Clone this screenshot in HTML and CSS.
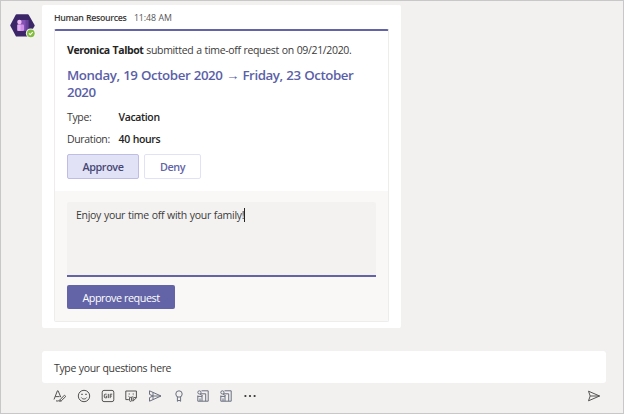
FILE: index.html
```html
<!DOCTYPE html>
<html lang="en">
<head>
<meta charset="utf-8">
<title>Human Resources</title>
<link rel="stylesheet" href="styles.css">
</head>
<body>
<main class="chat">
  <section class="message">
    <div class="avatar">
      <svg width="28" height="26" viewBox="0 0 28 26">
        <path d="M7.6 2.2h11.2L24.7 12.4 18.8 22.6H7.6L2.2 12.4z" fill="#3b2768" stroke="#3b2768" stroke-width="2" stroke-linejoin="round"/>
        <path d="M11 7h8.3v8.8a2 2 0 0 1-2 2H11z" fill="#8451b5"/>
        <path d="M16.5 7h2.8v10.4h-2.8z" fill="#69419b"/>
        <circle cx="10.4" cy="9" r="2.2" fill="#edbaf1"/>
        <rect x="8.2" y="11.5" width="6.8" height="6.5" rx="1" fill="#cf91e7"/>
        <path d="M8.6 11.5h3v6.2h-3z" fill="#e2b0f2"/>
        <circle cx="21.8" cy="20.3" r="4.9" fill="#f7f7f5"/>
        <circle cx="21.8" cy="20.3" r="3.9" fill="#83bd3f"/>
        <path d="M19.9 20.4l1.4 1.3 2.4-2.6" fill="none" stroke="#fff" stroke-width="1.1"/>
      </svg>
    </div>
    <article class="bubble">
      <header class="meta"><span class="sender">Human Resources</span><time class="time">11:48 AM</time></header>
      <div class="card">
        <div class="details">
          <p class="summary"><b>Veronica Talbot</b> submitted a time-off request on 09/21/2020.</p>
          <h1 class="dates">Monday, 19 October 2020 <span class="arrow">→</span> Friday, 23 October<br>2020</h1>
          <dl class="facts">
            <dt>Type:</dt><dd>Vacation</dd>
            <dt>Duration:</dt><dd>40 hours</dd>
          </dl>
          <div class="actions">
            <button class="btn approve">Approve</button>
            <button class="btn deny">Deny</button>
          </div>
        </div>
        <div class="reply">
          <div class="comment"><span class="comment-text">Enjoy your time off with your family!</span></div>
          <button class="btn submit">Approve request</button>
        </div>
      </div>
    </article>
  </section>
  <section class="compose">
    <div class="question">Type your questions here</div>
    <div class="toolbar">
      <div class="tools">
        <svg viewBox="0 0 14 14"><path d="M1 10.5 4.4 1.8h.7l2.7 6.4M2.2 7.6h4.4M3 11.8c1.5.6 3 .1 4-1l4.4-4.6 1.4 1.2-4.5 4.4c-.8.7-1.7.6-2.3.2M7 10.8l1.4 1.2"/></svg>
        <svg viewBox="0 0 14 14"><circle cx="7" cy="7" r="5.7"/><path d="M4.3 8.5c1.2 2 4.2 2 5.4 0"/><path class="solid" d="M4.4 4.8h1.2V6H4.4zM8.4 4.8h1.2V6H8.4z"/></svg>
        <svg viewBox="0 0 14 14"><rect x="1.2" y="1.4" width="11.6" height="11.2" rx="1.8"/><path d="M5.6 5.2H4.3q-1 0-1 .9v1.8q0 .9 1 .9h1.3V7.1h-.9M7.3 4.9v4.2M9.2 9.1V5.2h2M9.2 7.1h1.6"/></svg>
        <svg viewBox="0 0 14 14"><path d="M1.8 2h10.6v6.8l-3 3H8.2M12.4 8.6H10q-.8 0-.8.8v2.4M1.8 2v8.6h3M4.5 7.3c1 1.5 3.6 1.5 4.8 0M5.6 8.6v2.8q0 1 1 1t1-1V8.6"/><path class="solid" d="M4.7 4.6h1v1h-1zM8.7 4.6h1v1h-1z"/></svg>
        <svg class="blue" viewBox="0 0 14 14"><path d="M1.5 1.8 13 7 1.5 12.2V8.6L5 7 1.5 5.4zM5 7h8M5 3.4V7v3.6"/></svg>
        <svg class="blue" viewBox="0 0 14 14"><circle cx="7" cy="5" r="3.2"/><path d="M5.4 8v4.3L7 11.2l1.6 1.1V8"/></svg>
        <svg class="blue" viewBox="0 0 14 14"><path d="M5.5 1.8h6.7v10.4H1.8V6.5"/><circle cx="3.4" cy="3.4" r="1.6"/><path d="M1.8 7.4H6v4.8M4 9.4v2.8M5 4.8h4.7v7.4M4 5l3 2.2"/></svg>
        <svg class="blue" viewBox="0 0 14 14"><path d="M5.5 1.8h6.7v10.4H1.8V6.5"/><circle cx="3.4" cy="3.4" r="1.6"/><path d="M1.8 7.4H6v4.8M4 9.4v2.8M5 4.8h4.7v7.4M4 5l3 2.2"/></svg>
        <svg viewBox="0 0 14 14"><g class="solid"><circle cx="2.4" cy="7" r="1.1"/><circle cx="7" cy="7" r="1.1"/><circle cx="11.6" cy="7" r="1.1"/></g></svg>
      </div>
      <svg viewBox="0 0 14 14"><path d="M1.5 2.2 12.6 7 1.5 11.8 3.2 7zM3.2 7h9.4"/></svg>
    </div>
  </section>
</main>
</body>
</html>
```
FILE: styles.css
```css
* { box-sizing: border-box; }

body {
  margin: 0;
  font-family: "Open Sans", "Noto Sans", sans-serif;
  font-size: 10.5px;
  letter-spacing: -0.36px;
  word-spacing: 0.5px;
  color: #3b3a39;
}

.chat {
  display: flex;
  flex-direction: column;
  width: 624px;
  height: 414px;
  padding: 4px 17px 0 8px;
  background: #f2f1f0;
  border: 1px solid #c9c8c8;
  overflow: hidden;
}

.message { display: flex; height: 323px; }

.avatar { width: 33px; padding-top: 8px; }
.avatar svg { display: block; }

.bubble {
  width: 359px;
  padding: 0 12px;
  background: #fff;
  border-radius: 2px;
}

.meta {
  display: flex;
  gap: 7.5px;
  height: 24px;
  line-height: 26px;
  font-size: 8.8px;
  letter-spacing: -0.1px;
}
.sender { font-weight: 600; letter-spacing: -0.34px; }
.time { color: #555; }

.card {
  height: 293px;
  background: #fff;
  border: 1px solid #eeedec;
  border-top: 2px solid #6264a7;
  border-radius: 2px;
}

.details { height: 160px; padding: 11px 12px 0; }
.summary { margin: 0; line-height: 16px; letter-spacing: -0.34px; white-space: nowrap; }
.summary b { letter-spacing: -0.42px; color: #252423; }

.dates {
  margin: 9px 0 0;
  font-size: 13.3px;
  font-weight: 600;
  line-height: 17px;
  letter-spacing: -0.42px;
  white-space: nowrap;
  color: #5b5fa8;
}

.facts {
  display: grid;
  grid-template-columns: 51.5px 1fr;
  grid-auto-rows: 16px;
  row-gap: 6px;
  margin: 8px 0 7px;
  line-height: 16px;
}
.facts dd { margin: 0; font-weight: 600; color: #252423; }

.actions { display: flex; gap: 5px; }

.btn {
  height: 25px;
  padding: 0;
  font: inherit;
  font-size: 10.8px;
  line-height: 22px;
  letter-spacing: -0.4px;
  text-align: center;
  border-radius: 2px;
}
.approve {
  width: 72px;
  font-weight: 600;
  color: #464775;
  background: #e2e2f6;
  border: 1px solid #bdbde6;
}
.deny {
  width: 57px;
  font-weight: 600;
  color: #6264a7;
  background: #fff;
  border: 1px solid #e2e2f6;
}

.reply { height: 130px; padding: 11px 12px 0; background: #f9f8f7; }

.comment {
  width: 309px;
  height: 75px;
  padding: 5px 9px;
  line-height: 16px;
  letter-spacing: -0.3px;
  background: #f3f2f1;
  border-bottom: 2px solid #6264a7;
  border-radius: 2px 2px 0 0;
}
.comment-text {
  display: inline-block;
  height: 14px;
  line-height: 15px;
  border-right: 1px solid #252423;
}

.submit {
  display: block;
  width: 108px;
  height: 24px;
  margin-top: 8px;
  line-height: 25px;
  letter-spacing: -0.45px;
  color: #fff;
  background: #6264a7;
  border: 0;
}

.compose { margin: 23px 0 0 33px; }

.question {
  height: 32px;
  padding-left: 12px;
  line-height: 35px;
  background: #fff;
  border-radius: 3px;
}

.toolbar {
  display: flex;
  justify-content: space-between;
  padding: 6px 5px 0 11px;
}
.tools { display: flex; gap: 9.75px; }

.toolbar svg {
  width: 14px;
  height: 14px;
  fill: none;
  stroke: #555351;
  stroke-width: 1;
  stroke-linejoin: round;
}
.toolbar .blue { stroke: #6b7080; }
.toolbar .solid { fill: #333; stroke: none; }
```
